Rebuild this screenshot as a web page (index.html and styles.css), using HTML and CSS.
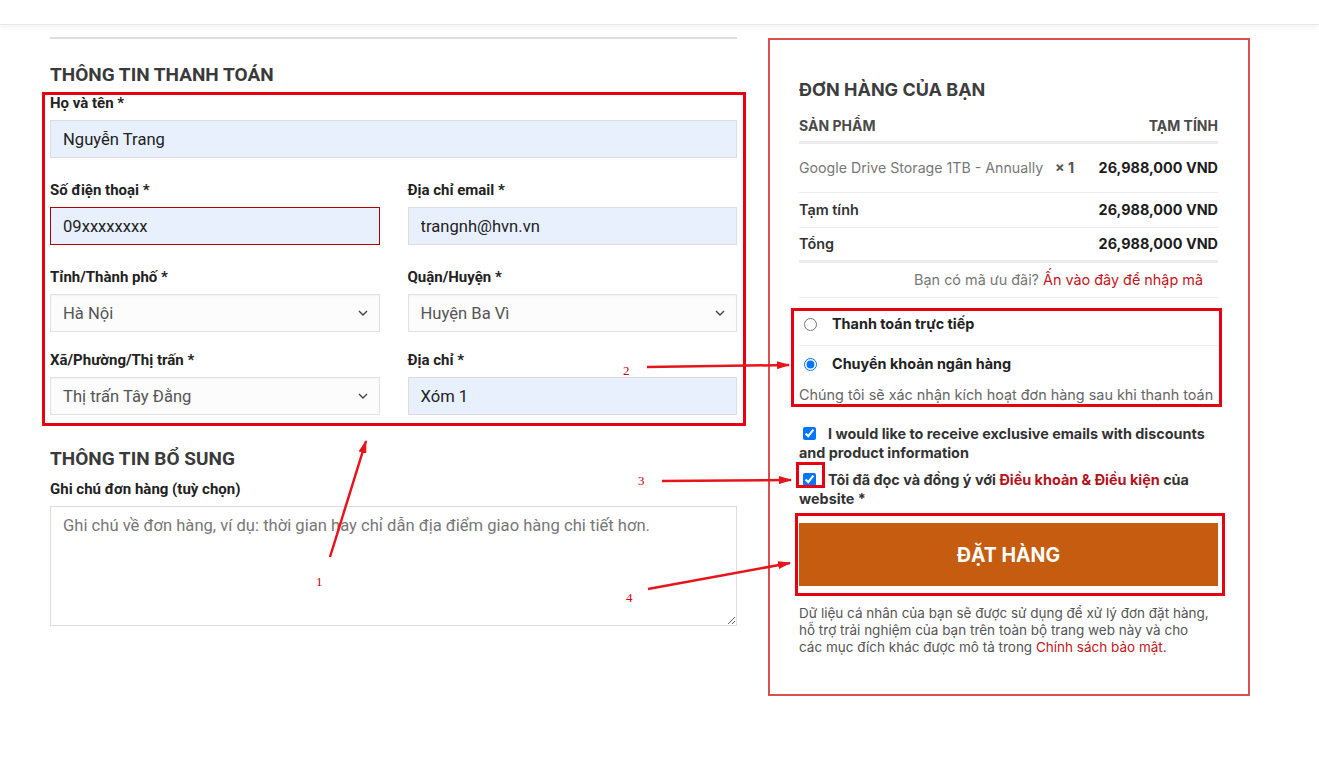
FILE: index.html
```html
<!DOCTYPE html>
<html lang="vi">
<head>
	<meta charset="utf-8">
	<title>Thanh toán</title>
	<link rel="stylesheet" href="styles.css">
</head>
<body>
	<div class="topbar"></div>
	<div class="page">
		<div class="billing">
			<h3 class="section-title">THÔNG TIN THANH TOÁN</h3>
			<div class="form-group">
				<label class="label">Họ và tên *</label>
				<input class="input-field filled" type="text" value="Nguyễn Trang">
			</div>
			<div class="form-row">
				<div class="form-group">
					<label class="label">Số điện thoại *</label>
					<input class="input-field filled invalid" type="text" value="09xxxxxxxx">
				</div>
				<div class="form-group">
					<label class="label">Địa chỉ email *</label>
					<input class="input-field filled" type="text" value="trangnh@hvn.vn">
				</div>
			</div>
			<div class="form-row tight">
				<div class="form-group">
					<label class="label">Tỉnh/Thành phố *</label>
					<div class="select-field"><span>Hà Nội</span><svg width="10" height="6" viewBox="0 0 10 6"><path d="M1 1l4 4 4-4" fill="none" stroke="#444" stroke-width="1.4"/></svg></div>
				</div>
				<div class="form-group">
					<label class="label">Quận/Huyện *</label>
					<div class="select-field"><span>Huyện Ba Vì</span><svg width="10" height="6" viewBox="0 0 10 6"><path d="M1 1l4 4 4-4" fill="none" stroke="#444" stroke-width="1.4"/></svg></div>
				</div>
			</div>
			<div class="form-row last">
				<div class="form-group">
					<label class="label">Xã/Phường/Thị trấn *</label>
					<div class="select-field"><span>Thị trấn Tây Đằng</span><svg width="10" height="6" viewBox="0 0 10 6"><path d="M1 1l4 4 4-4" fill="none" stroke="#444" stroke-width="1.4"/></svg></div>
				</div>
				<div class="form-group">
					<label class="label">Địa chỉ *</label>
					<input class="input-field filled" type="text" value="Xóm 1">
				</div>
			</div>

			<h3 class="section-title extra">THÔNG TIN BỔ SUNG</h3>
			<label class="label">Ghi chú đơn hàng (tuỳ chọn)</label>
			<textarea class="notes" placeholder="Ghi chú về đơn hàng, ví dụ: thời gian hay chỉ dẫn địa điểm giao hàng chi tiết hơn."></textarea>
		</div>

		<div class="order-box">
			<h3 class="order-title">ĐƠN HÀNG CỦA BẠN</h3>
			<div class="order-head"><span>SẢN PHẨM</span><span>TẠM TÍNH</span></div>
			<div class="order-item">
				<span class="product">Google Drive Storage 1TB - Annually <b class="qty">× 1</b></span>
				<span class="price">26,988,000 VND</span>
			</div>
			<div class="order-sub"><span>Tạm tính</span><span class="price">26,988,000 VND</span></div>
			<div class="order-total"><span>Tổng</span><span class="price">26,988,000 VND</span></div>
			<div class="coupon">Bạn có mã ưu đãi? <a href="#">Ấn vào đây để nhập mã</a></div>

			<div class="payment">
				<label class="pay-option first"><input type="radio" name="pay"> Thanh toán trực tiếp</label>
				<label class="pay-option"><input type="radio" name="pay" checked> Chuyển khoản ngân hàng</label>
				<div class="pay-desc">Chúng tôi sẽ xác nhận kích hoạt đơn hàng sau khi thanh toán</div>
			</div>

			<label class="check"><input type="checkbox" checked>I would like to receive exclusive emails with discounts<br>and product information</label>
			<label class="check terms"><input type="checkbox" checked>Tôi đã đọc và đồng ý với <a href="#">Điều khoản &amp; Điều kiện</a> của<br>website *</label>

			<button class="order-button" type="button">ĐẶT HÀNG</button>

			<p class="privacy">Dữ liệu cá nhân của bạn sẽ được sử dụng để xử lý đơn đặt hàng,<br>hỗ trợ trải nghiệm của bạn trên toàn bộ trang web này và cho<br>các mục đích khác được mô tả trong <a href="#">Chính sách bảo mật</a>.</p>
		</div>
	</div>

	<!-- annotation marks drawn over the screenshot -->
	<svg class="marks" width="1319" height="759" viewBox="0 0 1319 759">
		<defs>
			<marker id="head" markerWidth="13" markerHeight="8" refX="12" refY="4" orient="auto" markerUnits="userSpaceOnUse">
				<path d="M0 0L13 4L0 8z" fill="#e8141b"/>
			</marker>
		</defs>
		<g fill="none" stroke="#e60012" stroke-width="3">
			<rect x="43.5" y="93.5" width="701" height="331"/>
			<rect x="792.5" y="309.5" width="428" height="96"/>
			<rect x="797.5" y="463.5" width="26" height="23"/>
			<rect x="796.5" y="514.5" width="427" height="80"/>
		</g>
		<g stroke="#e8141b" stroke-width="2.5" marker-end="url(#head)">
			<line x1="330" y1="557" x2="366" y2="441"/>
			<line x1="647" y1="367" x2="789" y2="365"/>
			<line x1="662" y1="481" x2="791" y2="480"/>
			<line x1="648" y1="589" x2="790" y2="563"/>
		</g>
		<g class="mark-num">
			<text x="316" y="586">1</text>
			<text x="623" y="375">2</text>
			<text x="638" y="485">3</text>
			<text x="626" y="602">4</text>
		</g>
	</svg>
</body>
</html>
```

FILE: styles.css
```css
body {
	margin: 0;
	background-color: #fff;
	font-family: Roboto, "Liberation Sans", sans-serif;
	color: #333;
	position: relative;
	width: 1319px;
	height: 759px;
	overflow: hidden;
}
.topbar {
	height: 24px;
	background-color: #fff;
	border-bottom: 1px solid #e6e6e6;
	box-shadow: 0 2px 6px rgba(0, 0, 0, 0.06);
}
.page {
	display: flex;
	align-items: flex-start;
	gap: 31px;
	padding: 12px 0 0 50px;
}
.billing {
	width: 687px;
	border-top: 2px solid #ddd;
}
.section-title {
	margin: 25px 0 9px;
	font-size: 19px;
	line-height: 22px;
	font-weight: bold;
	color: #3a3a3a;
}
.section-title.extra {
	margin-top: 33px;
	margin-bottom: 11px;
}
.label {
	display: block;
	margin-bottom: 8px;
	font-size: 15px;
	line-height: 17px;
	font-weight: bold;
	color: #222;
}
.form-group {
	margin-bottom: 24px;
}
.form-row {
	display: grid;
	grid-template-columns: 1fr 1fr;
	gap: 28px;
}
.form-row.tight .form-group {
	margin-bottom: 20px;
}
.form-row.last .form-group {
	margin-bottom: 0;
}
.input-field {
	display: block;
	width: 100%;
	height: 38px;
	box-sizing: border-box;
	padding: 0 12px;
	border: 1px solid #ddd;
	font-family: Roboto, "Liberation Sans", sans-serif;
	font-size: 16.6px;
	color: #222;
	outline: none;
}
.filled {
	background-color: #e8f0fe;
}
.invalid {
	border-color: #b20000;
}
.select-field {
	display: flex;
	align-items: center;
	justify-content: space-between;
	height: 38px;
	box-sizing: border-box;
	padding: 0 11px 0 12px;
	border: 1px solid #e2e2e2;
	background-color: #fcfcfc;
	box-shadow: inset 0 1px 2px rgba(0, 0, 0, 0.04);
	font-size: 16.6px;
	color: #555;
}
.notes {
	display: block;
	width: 100%;
	height: 120px;
	box-sizing: border-box;
	padding: 9px 12px;
	border: 1px solid #ddd;
	font-family: Roboto, "Liberation Sans", sans-serif;
	font-size: 16.6px;
	line-height: 20px;
	color: #222;
	resize: vertical;
}
.notes::placeholder {
	color: #777;
}

.order-box {
	width: 482px;
	height: 658px;
	margin-top: 1px;
	box-sizing: border-box;
	padding: 39px 30px 0 29px;
	border: 2px solid #d9504f;
	font-family: Inter, "Liberation Sans", sans-serif;
	font-size: 14.4px;
	line-height: 17px;
	color: #333;
}
.order-title {
	margin: 0;
	font-size: 18px;
	line-height: 22px;
	font-weight: bold;
	color: #3d3d3d;
}
.order-head {
	display: flex;
	justify-content: space-between;
	margin-top: 16px;
	padding-bottom: 7px;
	border-bottom: 3px solid #ececec;
	font-size: 14px;
	font-weight: bold;
	color: #4a4a4a;
}
.order-item {
	display: flex;
	justify-content: space-between;
	padding: 15px 0 16px;
	border-bottom: 1px solid #ececec;
}
.product {
	font-size: 14.2px;
	color: #777;
}
.qty {
	margin-left: 8px;
	color: #555;
}
.price {
	font-weight: bold;
	color: #1d1d1d;
}
.order-sub {
	display: flex;
	justify-content: space-between;
	padding: 8px 0 9px;
	border-bottom: 1px solid #ececec;
	font-weight: 600;
}
.order-total {
	display: flex;
	justify-content: space-between;
	padding: 7px 0 8px;
	border-bottom: 3px solid #ececec;
	font-weight: 600;
}
.coupon {
	padding: 8px 15px 9px 0;
	border-bottom: 1px solid #ececec;
	text-align: right;
	color: #777;
}
.coupon a,
.privacy a {
	color: #c4161c;
	text-decoration: none;
}
.payment {
	margin-top: 17px;
}
.pay-option {
	display: flex;
	align-items: center;
	font-weight: bold;
	color: #222;
	line-height: 18px;
}
.pay-option input {
	margin: 0 15px 0 5px;
	width: 13px;
	height: 13px;
}
.pay-option.first {
	padding-bottom: 12px;
	border-bottom: 1px solid #eee;
	margin-bottom: 9px;
}
.pay-desc {
	margin-top: 13px;
	line-height: 18px;
	color: #666;
	white-space: nowrap;
}
.check {
	display: block;
	margin-top: 20px;
	font-weight: bold;
	line-height: 19px;
	color: #333;
}
.check input {
	margin: 0 12px 0 4px;
	width: 13px;
	height: 13px;
	vertical-align: -1px;
}
.check.terms {
	margin-top: 8px;
}
.check a {
	color: #b5121b;
	text-decoration: none;
}
.order-button {
	display: block;
	width: 100%;
	height: 63px;
	margin-top: 15px;
	border: none;
	background-color: #c55c10;
	color: #fff;
	font-family: Inter, "Liberation Sans", sans-serif;
	font-size: 19.5px;
	font-weight: bold;
	cursor: pointer;
}
.privacy {
	margin: 19px 0 0;
	font-size: 13.5px;
	line-height: 17px;
	color: #555;
	white-space: nowrap;
}

.marks {
	position: absolute;
	top: 0;
	left: 0;
	pointer-events: none;
}
.mark-num {
	font-family: "Liberation Serif", serif;
	font-size: 13px;
	fill: #d4000f;
}
```
